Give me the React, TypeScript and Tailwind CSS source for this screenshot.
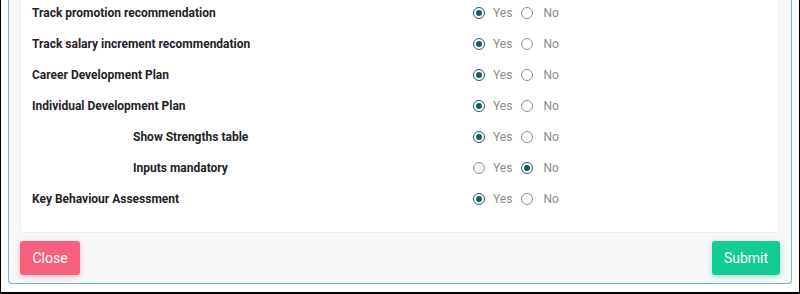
import React from "react";

type Row = { label: string; indent?: boolean; yes: boolean };

const rows: Row[] = [
  { label: "Track promotion recommendation", yes: true },
  { label: "Track salary increment recommendation", yes: true },
  { label: "Career Development Plan", yes: true },
  { label: "Individual Development Plan", yes: true },
  { label: "Show Strengths table", indent: true, yes: true },
  { label: "Inputs mandatory", indent: true, yes: false },
  { label: "Key Behaviour Assessment", yes: true },
];

function Radio({ checked }: { checked: boolean }) {
  return checked ? (
    <span className="w-[12px] h-[12px] rounded-full border-[1.5px] border-[#1d5a60] flex items-center justify-center bg-white">
      <span className="w-[6px] h-[6px] rounded-full bg-[#1d5a60]" />
    </span>
  ) : (
    <span className="w-[12px] h-[12px] rounded-full border border-[#8f8f8f] bg-white" />
  );
}

export default function App() {
  return (
    <div
      className="w-[800px] h-[294px] bg-white border-l border-r border-b-2 border-black overflow-hidden px-[7px] pb-[8px] flex flex-col"
      style={{ fontFamily: "Roboto, 'Liberation Sans', sans-serif" }}
    >
      <div className="flex-1 bg-[#f7f8f9] border-l border-r border-b border-[#6cb4e4] rounded-b-[4px] pl-[11px] pr-[12px] pb-[8px] flex flex-col justify-end overflow-hidden">
        <div className="bg-white border border-t-0 border-[#eceef0] rounded-b-[4px] pb-[18px] mb-[8px]">
          {rows.map((r, i) => (
            <div key={i} className="h-[31px] flex items-center">
              <div
                className={
                  (r.indent ? "pl-[112px] " : "pl-[11px] ") +
                  "w-[452px] text-[12px] font-bold text-[#1f2226]"
                }
              >
                {r.label}
              </div>
              <div className="flex items-center text-[12px] text-[#8c8c8c]">
                <Radio checked={r.yes} />
                <span className="ml-[8px] mr-[9px]">Yes</span>
                <Radio checked={!r.yes} />
                <span className="ml-[10px]">No</span>
              </div>
            </div>
          ))}
        </div>
        <div className="flex justify-between items-center">
          <button className="w-[60px] h-[34px] rounded-[3px] bg-[#f6607c] text-white text-[14px] shadow-[0_2px_6px_rgba(246,96,124,0.35)]">
            Close
          </button>
          <button className="w-[68px] h-[34px] rounded-[3px] bg-[#12cd93] text-white text-[14px] shadow-[0_2px_6px_rgba(18,205,147,0.35)] -mr-[1px]">
            Submit
          </button>
        </div>
      </div>
    </div>
  );
}
